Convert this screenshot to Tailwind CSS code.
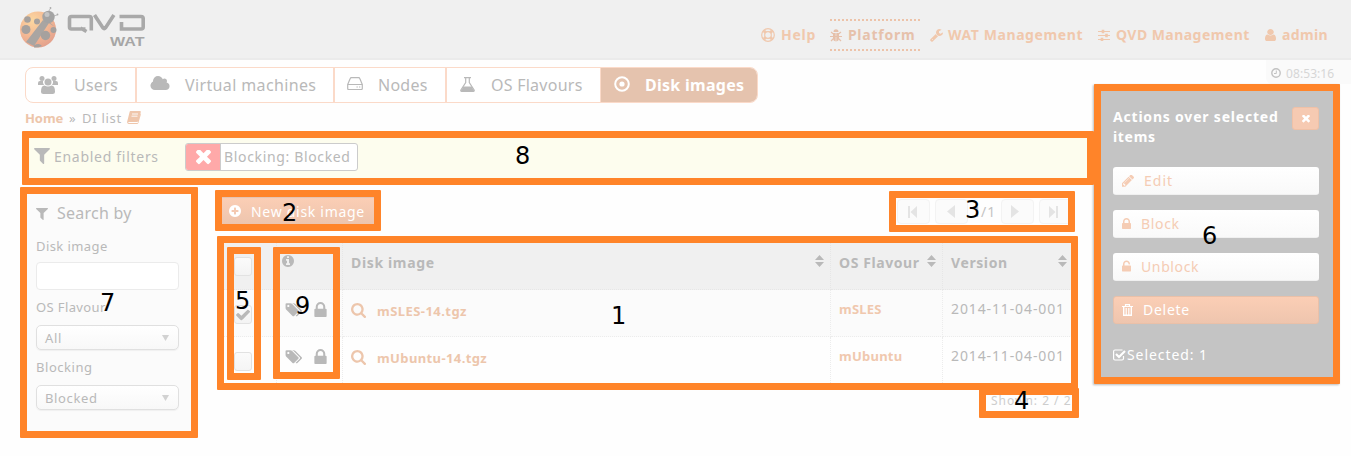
<!DOCTYPE html>
<html lang="en">
<head>
<meta charset="utf-8">
<title>QVD WAT - Disk images</title>
<script src="https://cdn.jsdelivr.net/npm/@tailwindcss/browser@4"></script>
</head>
<body class="bg-[#fefefe]">
<svg class="hidden">
  <symbol id="filter" viewBox="190 256 1412 1412"><path d="M1595 295q17 41-14 70l-493 493v742q0 42-39 59-13 5-25 5-27 0-45-19l-256-256q-19-19-19-45v-486l-493-493q-31-29-14-70 17-39 59-39h1280q42 0 59 39z"/></symbol>
  <symbol id="times" viewBox="302 430 1188 1188"><path transform="translate(0 -4)" d="M1490 1322q0 40-28 68l-136 136q-28 28-68 28t-68-28l-294-294-294 294q-28 28-68 28t-68-28l-136-136q-28-28-28-68t28-68l294-294-294-294q-28-28-28-68t28-68l136-136q28-28 68-28t68 28l294 294 294-294q28-28 68-28t68 28l136 136q28 28 28 68t-28 68l-294 294 294 294q28 28 28 68z"/></symbol>
  <symbol id="search" viewBox="64 128 1664 1664"><path d="M1216 832q0-185-131.5-316.5t-316.5-131.5-316.5 131.5-131.5 316.5 131.5 316.5 316.5 131.5 316.5-131.5 131.5-316.5zm512 832q0 52-38 90t-90 38q-54 0-90-38l-343-342q-179 124-399 124-143 0-273.5-55.5t-225-150-150-225-55.5-273.5 55.5-273.5 150-225 225-150 273.5-55.5 273.5 55.5 225 150 150 225 55.5 273.5q0 220-124 399l343 343q37 37 37 90z"/></symbol>
  <symbol id="lock" viewBox="320 128 1152 1408"><path d="M640 768h512v-192q0-106-75-181t-181-75-181 75-75 181v192zm832 96v576q0 40-28 68t-68 28h-960q-40 0-68-28t-28-68v-576q0-40 28-68t68-28h32v-192q0-184 132-316t316-132 316 132 132 316v192h32q40 0 68 28t28 68z"/></symbol>
  <symbol id="unlock" viewBox="320 128 1152 1408"><path d="M1376 768q40 0 68 28t28 68v576q0 40-28 68t-68 28h-960q-40 0-68-28t-28-68v-576q0-40 28-68t68-28h32v-192q0-184 132-316t316-132 316 132 132 316q0 26-19 45t-45 19h-64q-26 0-45-19t-19-45q0-106-75-181t-181-75-181 75-75 181v192h736z"/></symbol>
  <symbol id="tags" viewBox="64 192 1964 1452"><path d="M576 448q0-53-37.5-90.5t-90.5-37.5-90.5 37.5-37.5 90.5 37.5 90.5 90.5 37.5 90.5-37.5 37.5-90.5zm1067 576q0 53-37 90l-491 492q-39 37-91 37-53 0-90-37l-715-716q-38-37-64.5-101t-26.5-117v-416q0-52 38-90t90-38h416q53 0 117 26.5t102 64.5l715 714q37 39 37 91zm384 0q0 53-37 90l-491 492q-39 37-91 37-36 0-59-14t-53-45l470-470q37-37 37-90 0-52-37-91l-715-714q-38-38-102-64.5t-117-26.5h224q53 0 117 26.5t102 64.5l715 714q37 39 37 91z"/></symbol>
  <symbol id="check" viewBox="121 334 1550 1188"><path d="M1671 566q0 40-28 68l-724 724-136 136q-28 28-68 28t-68-28l-136-136-362-362q-28-28-28-68t28-68l136-136q28-28 68-28t68 28l294 295 656-657q28-28 68-28t68 28l136 136q28 28 28 68z"/></symbol>
  <symbol id="sort" viewBox="0 0 9 12"><path d="M4.5 0 9 5H0zM0 7h9l-4.5 5z"/></symbol>
</svg>

<div class="relative w-[1351px] h-[456px] overflow-hidden bg-[#fefefe] font-['Noto_Sans','Open_Sans',sans-serif] text-[14px] leading-[20px] text-[#b9b9b9] whitespace-nowrap">

  <header class="flex justify-between h-[60px] bg-[#f0f0f0] border-b-2 border-[#ebebeb]">
    <svg class="ml-[18px] w-[130px] h-[52px]" viewBox="18 0 130 52">
      <defs><radialGradient id="lb" cx=".35" cy=".25" r=".8"><stop offset="0" stop-color="#fbd7a0"/><stop offset=".5" stop-color="#f5bb95"/><stop offset="1" stop-color="#e3a08c"/></radialGradient></defs>
      <g stroke="#b0b0b0" stroke-width=".8" fill="none"><path d="M48 13l2-4M54 16l3-1"/></g>
      <circle cx="50.5" cy="8" r=".9" fill="#aaa"/><circle cx="57.5" cy="14.500" r=".9" fill="#aaa"/>
      <circle cx="38" cy="29.500" r="18" fill="url(#lb)"/>
      <path d="M44 20 55 27 48 21zM43 20l6 3L34 46l-8-4z" fill="#a9a5a2"/>
      <g fill="#a6a19e"><circle cx="26" cy="29.500" r="4.500"/><circle cx="37" cy="21.500" r="3"/><circle cx="45.500" cy="35.500" r="4.700"/><circle cx="53.500" cy="30" r="3"/><circle cx="27.500" cy="19.500" r="3.300"/><path d="M34 45.500q5-3 8 .5-4 2-8 1.500z"/></g>
      <circle cx="48.500" cy="17" r="6.200" fill="#a3a3a3"/><circle cx="47" cy="14.500" r="2.500" fill="#c4c4c4"/>
      <g fill="none" stroke="#a9a9a9" stroke-width="3.600"><path d="M85.500 29H71.500q-2 0-2-2V18.500q0-2 2-2H89.300q2 0 2 2V30.500M80.500 28l6 3.500M94.500 15l8.500 13q1.200 1.500 2.400 0l8.500-13M121.500 22v7H141q2.200 0 2.200-2V18.500q0-2-2.200-2H119.500"/></g>
      <text x="110" y="46" textLength="34.500" lengthAdjust="spacingAndGlyphs" font-family="Liberation Sans" font-weight="700" font-size="13" fill="#a6a6a6">WAT</text>
    </svg>
    <nav class="flex mt-[19px] mr-[23px] h-[32px] font-bold text-[#f0c8ad] leading-[20px]">
      <a class="flex items-center w-[69px] tracking-[0.75px]">
        <svg class="w-[14px] h-[14px] mr-[6px]" viewBox="0 0 14 14" fill="none" stroke="currentColor"><circle cx="7" cy="7" r="6.300" stroke-width="1.200"/><circle cx="7" cy="7" r="3.300" stroke-width="1.200"/><path d="m2.800 2.800 2 2M9.200 9.200l2 2M11.200 2.800l-2 2M4.800 9.200l-2 2" stroke-width="3"/></svg>Help</a>
      <a class="flex items-center w-[90px] border-y-2 border-dotted border-[#edc3a9] text-[#e6c1ab] tracking-[0.75px]">
        <svg class="w-[12px] h-[13px] mr-[6px]" viewBox="0 0 12 13" fill="currentColor" stroke="currentColor"><path d="M3.500 3a2.500 2.800 0 0 1 5 0z" stroke="none"/><path d="M3 4h2.700v8.500Q3 12 3 9zM6.300 4H9v5q0 3-2.700 3.500z" stroke="none"/><path d="M0 7.500h12M1 3l2.500 2M11 3 8.500 5M1 12l2.500-2.500M11 12 8.500 9.500" fill="none" stroke-width="1.200"/></svg>Platform</a>
      <a class="flex items-center ml-[10px] w-[168px] tracking-[0.59px]">
        <svg class="w-[13px] h-[13px] mr-[5px]" viewBox="64 128 1664 1664" fill="currentColor"><path d="M448 1472q0-26-19-45t-45-19-45 19-19 45 19 45 45 19 45-19 19-45zm644-420l-682 682q-37 37-90 37-52 0-91-37l-106-108q-38-36-38-90 0-53 38-91l681-681q39 98 114.500 173.500t173.500 114.500zm634-435q0 39-23 106-47 134-164.500 217.500t-258.500 83.500q-185 0-316.500-131.500t-131.500-316.500 131.500-316.500 316.500-131.500q58 0 121.500 16.500t107.500 46.500q16 11 16 28t-16 28l-293 169v224l193 107q5-3 79-48.500t135.500-81 70.500-35.500q15 0 23.500 10t8.500 25z"/></svg>WAT Management</a>
      <a class="flex items-center w-[167px] tracking-[0.46px]">
        <svg class="w-[12px] h-[12px] mr-[6px]" viewBox="0 0 12 12" fill="none" stroke="currentColor"><path d="M0 2.500h12M0 6.500h12M0 10.500h12" stroke-width="1.200"/><path d="M5 .8v3.400M8.500 4.800v3.400M4 8.800v3.200" stroke-width="2.600"/></svg>QVD Management</a>
      <a class="flex items-center tracking-[0.38px]">
        <svg class="w-[11px] h-[12px] mr-[6px]" viewBox="256 128 1280 1536" preserveAspectRatio="none" fill="currentColor"><path d="M1536 1399q0 109-62.500 187t-150.500 78h-854q-88 0-150.500-78t-62.500-187q0-85 8.500-160.500t31.500-152 58.500-131 94-89 134.500-34.500q131 128 313 128t313-128q76 0 134.500 34.500t94 89 58.500 131 31.500 152 8.500 160.500zm-256-887q0 159-112.500 271.500t-271.500 112.500-271.500-112.500-112.500-271.500 112.500-271.500 271.500-112.500 271.500 112.500 112.500 271.500z"/></svg>admin</a>
    </nav>
  </header>

  <div class="flex">
    <main class="w-[1094px]">
      <div class="flex mt-[7px] ml-[25px] w-[733px] h-[36px] rounded-[8px] border border-[#fbdac9] overflow-hidden bg-white text-[16px] leading-[22px] box-border">
        <div class="flex items-center w-[109px] pl-[12px] tracking-[0.25px]">
          <svg class="w-[20px] h-[18px] mr-[16px] -mt-px shrink-0" viewBox="0 0 20 18" fill="currentColor"><circle cx="4" cy="2.500" r="2.500"/><circle cx="16" cy="2.500" r="2.500"/><path d="M0 9V7q0-2 2-2h3Q4.500 7 6 9zM20 9V7q0-2-2-2h-3q.5 2-1 4z"/><circle cx="10" cy="6" r="3.500"/><path d="M3 15.500Q3 9.500 6.500 9.500q3.500 2 7 0 3.500 0 3.500 6 0 2.500-2.500 2.500h-9Q3 18 3 15.500z"/></svg>Users</div>
        <div class="flex items-center w-[198px] border-l-2 border-[#fbdac9] pl-[13px] tracking-[0.37px]">
          <svg class="w-[20px] h-[14px] mr-[15px] -mt-[4px] shrink-0" viewBox="64 128 1920 1408" fill="currentColor"><path d="M1984 1152q0 159-112.500 271.500t-271.500 112.500h-1088q-185 0-316.500-131.500t-131.500-316.500q0-132 71-241.500t187-163.500q-2-28-2-43 0-212 150-362t362-150q158 0 286.500 88t187.500 230q70-62 166-62 106 0 181 75t75 181q0 75-41 138 129 30 213 134.500t84 239.500z"/></svg>Virtual machines</div>
        <div class="flex items-center w-[112px] border-l-2 border-[#fbdac9] pl-[12px] tracking-[0.25px]">
          <svg class="w-[16px] h-[13px] mr-[15px] -mt-[3px] shrink-0" viewBox="0 0 16 13" fill="none" stroke="currentColor" stroke-width="1.200"><path d="M.7 7.500h14.600v4q0 1-1 1H1.700q-1 0-1-1zl2.500-6q.3-.8 1.200-.8h7.200q.9 0 1.200.8l2.500 6"/><path d="M9.500 10h1.300M12 10h1.300"/></svg>Nodes</div>
        <div class="flex items-center w-[155px] border-l-2 border-[#fbdac9] pl-[13px] tracking-[0.25px]">
          <svg class="w-[15px] h-[15px] mr-[16px] -mt-[2px] shrink-0" viewBox="0 0 15 15" fill="none" stroke="currentColor"><path d="M4 .6h7" stroke-width="1.200"/><path d="M5.700 1v4.500L.9 13q-.5 1.400.8 1.400h11.600q1.300 0 .8-1.400L9.300 5.500V1" stroke-width="1.200"/><path d="M3.500 9.500h8l2.500 4-.5 1h-12l-.5-1z" fill="currentColor" stroke="none"/></svg>OS Flavours</div>
        <div class="flex items-center grow border-l border-[#fbdac9] bg-[#e5c3ae] pl-[13px] font-bold text-white tracking-[0.28px]">
          <svg class="w-[16px] h-[16px] mr-[15px] -mt-[2px] shrink-0" viewBox="0 0 16 16" fill="none" stroke="currentColor"><circle cx="8" cy="8" r="6.800" stroke-width="2"/><circle cx="8" cy="8" r="2.600" fill="currentColor" stroke="none"/></svg>Disk images</div>
      </div>

      <div class="flex ml-[25px] mt-[5px] h-[23px] text-[13px]">
        <a class="font-bold text-[#edc5aa] tracking-[-0.08px] w-[44px]">Home</a>
        <span class="w-[13px]">»</span>
        <span class="tracking-[0.71px] w-[45px]">DI list</span>
        <svg class="mt-[3px] w-[14px] h-[13px]" viewBox="0 0 14 13"><path d="M3.500 0h9.500q1 0 .8 1l-2.500 9q-.3 1-1.300 1H1.500q-.5.500.2 1h9l2.800-9.500.5.500-2.600 9q-.4 1-1.400 1H1.500Q-.3 12.500.200 10.500L2.600 1q.2-1 .9-1z" fill="#efc6ab"/><path d="M5 3h6M4.500 5.200h6" stroke="#fefefe" stroke-width=".9"/></svg>
      </div>

      <section class="flex h-[54px] ml-[22px] pl-[12px] pt-[12px] bg-[#fdfdee]">
        <svg class="mt-[5px] w-[16px] h-[16px] mr-[4px]" fill="currentColor"><use href="#filter"/></svg>
        <span class="mt-[4px] w-[131px] tracking-[0.71px]">Enabled filters</span>
        <div class="flex w-[173px] h-[28px] rounded-[3px] border border-[#ccc] bg-white overflow-hidden">
          <span class="flex items-center justify-center w-[35px] bg-[#ffa9a9] border-r border-[#ccc]"><svg class="w-[15px] h-[15px]" fill="#fff"><use href="#times"/></svg></span>
          <span class="mt-[3px] ml-[3px] tracking-[0.65px]">Blocking: Blocked</span>
        </div>
      </section>

      <div class="flex">
        <aside class="flex flex-col mt-[2px] ml-[20px] w-[178px] h-[251px] px-[16px] pt-[15px] bg-[#fbfbfb] text-[13px] leading-[20px]">
          <div class="flex h-[34px] text-[16px] leading-[22px] tracking-[0.23px]"><svg class="mt-[6px] mr-[9px] w-[12px] h-[12px]" fill="currentColor"><use href="#filter"/></svg>Search by</div>
          <label class="h-[26px] tracking-[0.42px]">Disk image</label>
          <div class="w-[143px] h-[28px] rounded-[4px] border border-[#ebebeb] bg-white shrink-0"></div>
          <label class="mt-[7px] h-[28px] tracking-[0.38px]">OS Flavour</label>
          <div class="flex justify-between w-[143px] h-[25px] shrink-0 rounded-[5px] border border-[#e0e0e0] bg-gradient-to-b from-white to-[#f8f8f8] pl-[8px] pr-[9px] pt-[2px] tracking-[0.67px] shadow-[0_1px_1px_#f0f0f0]">All<svg class="mt-[7px] w-[7px] h-[6px]" viewBox="0 0 7 6"><path d="M0 0h7L3.500 6z" fill="#d2d2d2"/></svg></div>
          <label class="mt-[7px] h-[28px] tracking-[0.54px]">Blocking</label>
          <div class="flex justify-between w-[143px] h-[25px] shrink-0 rounded-[5px] border border-[#e0e0e0] bg-gradient-to-b from-white to-[#f8f8f8] pl-[8px] pr-[9px] pt-[2px] tracking-[0.64px] shadow-[0_1px_1px_#f0f0f0]">Blocked<svg class="mt-[7px] w-[7px] h-[6px]" viewBox="0 0 7 6"><path d="M0 0h7L3.500 6z" fill="#d2d2d2"/></svg></div>
        </aside>

        <div class="ml-[24px] w-[850px]">
          <div class="flex justify-between mt-[12px] h-[46px]">
            <button class="flex w-[152px] h-[27px] items-start pl-[7px] pt-[4px] bg-gradient-to-b from-[#fbceb5] to-[#edc5ae] border-t border-[#e5c4b3] text-white tracking-[0.71px]">
              <svg class="mt-[3px] mr-[10px] w-[12px] h-[12px]" viewBox="128 128 1536 1536" fill="currentColor"><path d="M1344 960v-128q0-26-19-45t-45-19h-256v-256q0-26-19-45t-45-19h-128q-26 0-45 19t-19 45v256h-256q-26 0-45 19t-19 45v128q0 26 19 45t45 19h256v256q0 26 19 45t45 19h128q26 0 45-19t19-45v-256h256q26 0 45-19t19-45zm320-64q0 209-103 385.500t-279.500 279.500-385.500 103-385.500-103-279.500-279.500-103-385.500 103-385.500 279.500-279.500 385.500-103 385.500 103 279.500 279.500 103 385.500z"/></svg>New disk image</button>
            <div class="flex mt-[2px] text-[#c4c4c4]">
              <span class="flex items-center justify-center w-[33px] h-[25px] mr-[5px] rounded-[4px] border border-[#f3f3f3] bg-[#fbfbfb]"><svg class="-ml-[3px] w-[9px] h-[12px]" viewBox="0 0 9 12" fill="#e4e4e4"><path d="M0 0h2v12H0zM9 0v12L2.500 6z"/></svg></span>
              <span class="flex items-center justify-center w-[33px] h-[25px] rounded-[4px] border border-[#f3f3f3] bg-[#fbfbfb]"><svg class="-ml-[2px] w-[8px] h-[13px]" viewBox="0 0 8 13" fill="#e4e4e4"><path d="M8 0v13L0 6.500z"/></svg></span>
              <span class="w-[33px] pl-[5px] mt-[3px] tracking-[1px]"><span class="inline-block w-[8px]">1</span>/1</span>
              <span class="flex items-center justify-center w-[33px] h-[25px] mr-[5px] rounded-[4px] border border-[#f3f3f3] bg-[#fbfbfb]"><svg class="-ml-[5px] w-[8px] h-[13px]" viewBox="0 0 8 13" fill="#e4e4e4"><path d="M0 0v13l8-6.500z"/></svg></span>
              <span class="flex items-center justify-center w-[33px] h-[25px] rounded-[4px] border border-[#f3f3f3] bg-[#fbfbfb]"><svg class="-ml-[5px] w-[9px] h-[12px]" viewBox="0 0 9 12" fill="#e4e4e4"><path d="M9 0H7v12h2zM0 0v12l6.500-6z"/></svg></span>
            </div>
          </div>

          <div class="grid grid-cols-[55px_66px_488px_112px_129px] grid-rows-[47px_47px_46px] w-[850px] text-[13px]">
            <div class="bg-[#f0f0f0] border-r border-b border-dotted border-[#e6e6e6] pt-[14px] pl-[12px]"><div class="w-[18px] h-[19px] rounded-[3px] border border-[#e2e2e2] bg-gradient-to-b from-[#fbfbfb] to-[#f3f3f3]"></div></div>
            <div class="bg-[#f0f0f0] border-r border-b border-dotted border-[#e6e6e6] pt-[12px] pl-[5px]"><svg class="w-[12px] h-[12px]" viewBox="128 128 1536 1536" fill="currentColor"><path d="M1152 1376v-160q0-14-9-23t-23-9h-96v-512q0-14-9-23t-23-9h-320q-14 0-23 9t-9 23v160q0 14 9 23t23 9h96v320h-96q-14 0-23 9t-9 23v160q0 14 9 23t23 9h448q14 0 23-9t9-23zm-128-896v-160q0-14-9-23t-23-9h-192q-14 0-23 9t-9 23v160q0 14 9 23t23 9h192q14 0 23-9t9-23zm640 416q0 209-103 385.500t-279.500 279.500-385.500 103-385.500-103-279.500-279.500-103-385.500 103-385.500 279.500-279.500 385.500-103 385.500 103 279.500 279.500 103 385.500z"/></svg></div>
            <div class="flex justify-between bg-[#f0f0f0] border-r border-b border-dotted border-[#e6e6e6] pt-[10px] pl-[8px] pr-[6px] font-bold text-[14px] tracking-[0.65px]">Disk image<svg class="mt-[2px] w-[9px] h-[12px]" fill="#b9b9b9"><use href="#sort"/></svg></div>
            <div class="flex justify-between bg-[#f0f0f0] border-r border-b border-dotted border-[#e6e6e6] pt-[10px] pl-[8px] pr-[6px] font-bold text-[14px] tracking-[0.58px]">OS Flavour<svg class="mt-[2px] w-[9px] h-[12px]" fill="#b9b9b9"><use href="#sort"/></svg></div>
            <div class="flex justify-between bg-[#f0f0f0] border-b border-dotted border-[#e6e6e6] pt-[10px] pl-[8px] pr-[5px] font-bold text-[14px] tracking-[0.6px]">Version<svg class="mt-[2px] w-[9px] h-[12px]" fill="#b9b9b9"><use href="#sort"/></svg></div>

            <div class="bg-[#fbfbfb] border-r border-b border-dotted border-[#ececec] pt-[15px] pl-[12px]"><div class="flex items-center justify-center w-[18px] h-[19px] rounded-[3px] border border-[#e2e2e2] bg-gradient-to-b from-[#fbfbfb] to-[#f3f3f3]"><svg class="w-[14px] h-[12px]" fill="currentColor"><use href="#check"/></svg></div></div>
            <div class="flex bg-[#fbfbfb] border-r border-b border-dotted border-[#ececec] pt-[12px] pl-[8px]"><svg class="mt-[1px] w-[17px] h-[14px]" fill="currentColor"><use href="#tags"/></svg><svg class="ml-[12px] w-[13px] h-[15px]" fill="currentColor"><use href="#lock"/></svg></div>
            <div class="flex bg-[#fbfbfb] border-r border-b border-dotted border-[#ececec] pt-[11px] pl-[8px] font-bold text-[#edc6ac] tracking-[0.45px]"><svg class="mt-[2px] mr-[11px] w-[15px] h-[15px]" fill="currentColor"><use href="#search"/></svg>mSLES-14.tgz</div>
            <div class="bg-[#fbfbfb] border-r border-b border-dotted border-[#ececec] pt-[9px] pl-[8px] font-bold text-[#f0c8ae] tracking-[0.23px]">mSLES</div>
            <div class="bg-[#fbfbfb] border-b border-dotted border-[#ececec] pt-[9px] pl-[8px] text-[14px] tracking-[0.88px]">2014-11-04-001</div>

            <div class="border-r border-dotted border-[#ececec] pt-[15px] pl-[12px]"><div class="w-[18px] h-[19px] rounded-[3px] border border-[#e2e2e2] bg-gradient-to-b from-[#fbfbfb] to-[#f5f5f5]"></div></div>
            <div class="flex border-r border-dotted border-[#ececec] pt-[12px] pl-[8px]"><svg class="mt-[1px] w-[17px] h-[14px]" fill="currentColor"><use href="#tags"/></svg><svg class="ml-[12px] w-[13px] h-[15px]" fill="currentColor"><use href="#lock"/></svg></div>
            <div class="flex border-r border-dotted border-[#ececec] pt-[11px] pl-[8px] font-bold text-[#edc6ac] tracking-[0.39px]"><svg class="mt-[2px] mr-[11px] w-[15px] h-[15px]" fill="currentColor"><use href="#search"/></svg>mUbuntu-14.tgz</div>
            <div class="border-r border-dotted border-[#ececec] pt-[9px] pl-[8px] font-bold text-[#f0c8ae] tracking-[0.24px]">mUbuntu</div>
            <div class="pt-[9px] pl-[8px] text-[14px] tracking-[0.88px]">2014-11-04-001</div>
          </div>
          <div class="pl-[769px] mt-[9px] text-[12px] leading-[17px] tracking-[0.99px] text-[#cdcdcd]">Shown: 2 / 2</div>
        </div>
      </div>
    </main>

    <div class="w-[257px]">
      <div class="flex items-center ml-[172px] h-[24px] pl-[5px] pt-[2px] rounded-bl-[6px] bg-[#fafafa] text-[12px] leading-[17px] text-[#d6d6d6] tracking-[0.08px]">
        <svg class="w-[10px] h-[10px] mr-[5px]" viewBox="0 0 10 10" fill="none" stroke="#c2c2c2"><circle cx="5" cy="5" r="4.200" stroke-width="1.400"/><path d="M5.300 2.500v3H3" stroke-width="1"/></svg>08:53:16</div>
      <section class="flex flex-col w-[246px] h-[300px] pl-[19px] pr-[21px] bg-[#c4c4c4] text-white shadow-[-1px_1px_2px_#bbb]">
        <div class="flex justify-between pt-[23px] h-[83px] font-bold">
          <h2 class="tracking-[0.8px]">Actions over selected<br><span class="tracking-[0.68px]">items</span></h2>
          <button class="flex items-center justify-center w-[27px] h-[23px] rounded-[3px] border border-[#efc1a7] bg-[#f6cab2]"><svg class="w-[8px] h-[8px]" fill="#fff"><use href="#times"/></svg></button>
        </div>
        <button class="flex items-start mb-[15px] h-[28px] rounded-[3px] border-b border-[#f0f0f0] bg-gradient-to-b from-white to-[#f9f9f9] pl-[9px] pt-[4px] text-[#f5ccb4] tracking-[1px]"><svg class="mt-[4px] mr-[10px] w-[12px] h-[12px]" viewBox="128 236 1516 1428" fill="currentColor"><path d="M491 1536l91-91-235-235-91 91v107h128v128h107zm523-928q0-22-22-22-10 0-17 7l-542 542q-7 7-7 17 0 22 22 22 10 0 17-7l542-542q7-7 7-17zm-54-192l416 416-832 832h-416v-416zm683 96q0 53-37 90l-166 166-416-416 166-165q36-38 90-38 53 0 91 38l235 234q37 39 37 91z"/></svg>Edit</button>
        <button class="flex items-start mb-[15px] h-[28px] rounded-[3px] border-b border-[#f0f0f0] bg-gradient-to-b from-white to-[#f9f9f9] pl-[9px] pt-[4px] text-[#f5ccb4] tracking-[0.65px]"><svg class="mt-[4px] mr-[10px] w-[9px] h-[11px]" fill="currentColor"><use href="#lock"/></svg>Block</button>
        <button class="flex items-start mb-[15px] h-[28px] rounded-[3px] border-b border-[#f0f0f0] bg-gradient-to-b from-white to-[#f9f9f9] pl-[9px] pt-[4px] text-[#f5ccb4] tracking-[0.62px]"><svg class="mt-[3px] mr-[10px] w-[9px] h-[12px]" fill="currentColor"><use href="#unlock"/></svg>Unblock</button>
        <button class="flex items-start h-[28px] rounded-[3px] border border-[#eac0a8] bg-gradient-to-b from-[#fbceb5] to-[#eec5ae] pl-[8px] pt-[3px] tracking-[0.72px]"><svg class="mt-[4px] mr-[10px] w-[11px] h-[12px]" viewBox="0 0 11 12" fill="none" stroke="currentColor"><path d="M0 2.500h11M3.500 2V.6h4V2" stroke-width="1.200"/><path d="M1.700 3v8.300h7.600V3" stroke-width="1.400"/><path d="M4.200 4v7M6.800 4v7" stroke-width="1.200"/></svg>Delete</button>
        <div class="flex mt-[21px] tracking-[0.92px]"><svg class="mt-[4px] mr-px w-[13px] h-[12px]" viewBox="0 0 13 12" fill="none" stroke="currentColor"><path d="M10.500 7v2.500q0 1.500-1.500 1.500H2Q.6 11 .6 9.500v-7Q.6 1 2 1h7.500" stroke-width="1.200"/><path d="m3 5 3 3 6-6" stroke-width="2.200"/></svg>Selected: 1</div>
      </section>
    </div>
  </div>

  <!-- Numbered callouts over the interface -->
  <div class="absolute left-[22px] top-[131px] w-[1072px] h-[54px] border-7 border-[#ff8429] rounded-[1px]"></div>
  <div class="absolute left-[20px] top-[187px] w-[178px] h-[251px] border-7 border-[#ff8429] rounded-[1px]"></div>
  <div class="absolute left-[215px] top-[190px] w-[166px] h-[41px] border-7 border-[#ff8429] rounded-[1px]"></div>
  <div class="absolute left-[889px] top-[191px] w-[186px] h-[41px] border-7 border-[#ff8429] rounded-[1px]"></div>
  <div class="absolute left-[217px] top-[236px] w-[861px] h-[154px] border-7 border-[#ff8429] rounded-[1px]"></div>
  <div class="absolute left-[227px] top-[247px] w-[34px] h-[133px] border-7 border-[#ff8429] rounded-[1px]"></div>
  <div class="absolute left-[273px] top-[247px] w-[67px] h-[132px] border-7 border-[#ff8429] rounded-[1px]"></div>
  <div class="absolute left-[979px] top-[388px] w-[100px] h-[30px] border-7 border-[#ff8429] rounded-[1px]"></div>
  <div class="absolute left-[1094px] top-[84px] w-[246px] h-[300px] border-7 border-[#ff8429] rounded-[1px]"></div>
  <div class="text-black text-[24px] leading-[24px] font-['DejaVu_Sans']">
    <span class="absolute left-[611px] top-[304px]">1</span>
    <span class="absolute left-[282px] top-[201px]">2</span>
    <span class="absolute left-[965px] top-[198px]">3</span>
    <span class="absolute left-[1014px] top-[389px]">4</span>
    <span class="absolute left-[235px] top-[289px]">5</span>
    <span class="absolute left-[1202px] top-[224px]">6</span>
    <span class="absolute left-[100px] top-[291px]">7</span>
    <span class="absolute left-[515px] top-[144px]">8</span>
    <span class="absolute left-[295px] top-[294px]">9</span>
  </div>
</div>
</body>
</html>
